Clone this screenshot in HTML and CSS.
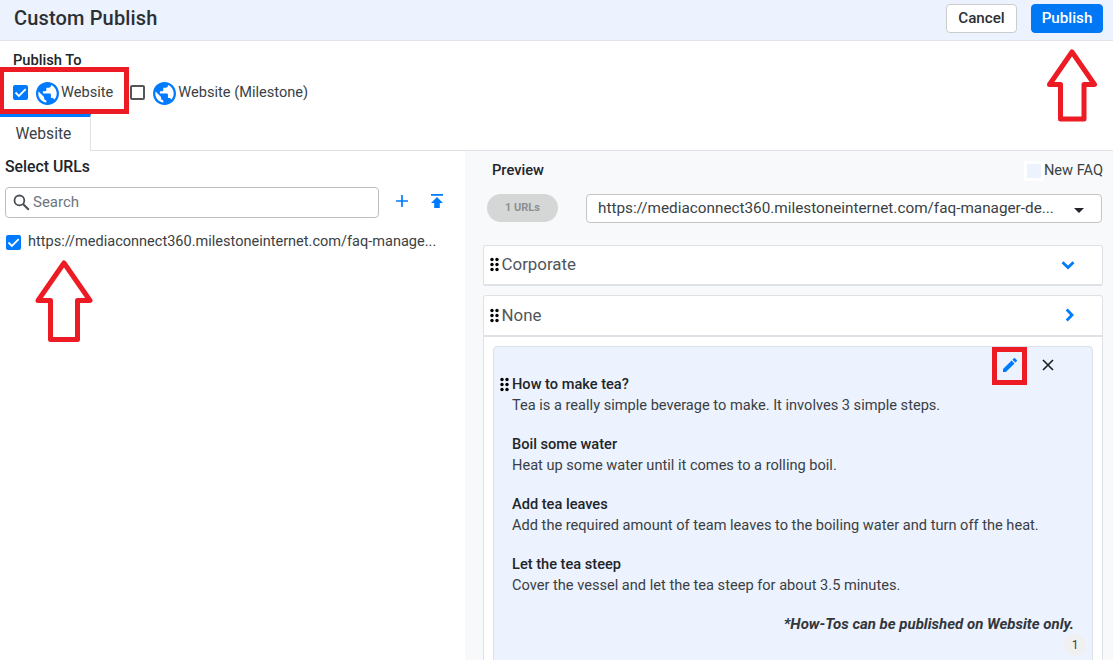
FILE: index.html
```html
<!DOCTYPE html>
<html lang="en">
<head>
    <meta charset="UTF-8">
    <meta name="viewport" content="width=device-width, initial-scale=1.0">
    <title>Custom Publish</title>
    <link rel="stylesheet" href="styles.css">
</head>
<body>
    <!-- Shared icons -->
    <svg class="sprite" width="0" height="0">
        <symbol id="globe" viewBox="2 2 20 20">
            <path d="M12 2C6.48 2 2 6.48 2 12s4.48 10 10 10 10-4.480 10-10S17.520 2 12 2zm-1 17.930c-3.950-.49-7-3.850-7-7.930 0-.62.080-1.210.21-1.790L9 15v1c0 1.100.9 2 2 2v1.930zm6.900-2.540c-.26-.81-1-1.390-1.900-1.390h-1v-3c0-.55-.45-1-1-1H8v-2h2c.55 0 1-.45 1-1V7h2c1.100 0 2-.9 2-2v-.41c2.930 1.190 5 4.060 5 7.410 0 2.080-.8 3.970-2.100 5.390z"/>
        </symbol>
        <symbol id="grip" viewBox="0 0 9 15">
            <circle cx="2" cy="2.500" r="1.700"/><circle cx="7" cy="2.500" r="1.700"/>
            <circle cx="2" cy="7.500" r="1.700"/><circle cx="7" cy="7.500" r="1.700"/>
            <circle cx="2" cy="12.500" r="1.700"/><circle cx="7" cy="12.500" r="1.700"/>
        </symbol>
        <symbol id="check" viewBox="0 0 15 15">
            <path d="M2.500 7.500l3.400 3.400 6.800-6.800" fill="none" stroke="#fff" stroke-width="1.800"/>
        </symbol>
    </svg>

    <header class="header">
        <h1>Custom Publish</h1>
        <button class="btn">Cancel</button>
        <button class="btn btn-primary">Publish</button>
    </header>

    <section class="publish-to">
        <h2>Publish To</h2>
        <div class="sites">
            <label class="site">
                <span class="checkbox checked"><svg><use href="#check"/></svg></span>
                <svg class="globe"><use href="#globe"/></svg>
                <span>Website</span>
            </label>
            <label class="site">
                <span class="checkbox"></span>
                <svg class="globe"><use href="#globe"/></svg>
                <span>Website (Milestone)</span>
            </label>
        </div>
    </section>

    <nav class="tabs">
        <div class="tab">Website</div>
    </nav>

    <main class="content">
        <section class="urls">
            <h2>Select URLs</h2>
            <div class="search-row">
                <div class="search">
                    <svg width="17" height="17" viewBox="0 0 17 17">
                        <circle cx="6.400" cy="6.400" r="4.900" fill="none" stroke="#495057" stroke-width="1.800"/>
                        <path d="M10 10l5.800 5.800" stroke="#495057" stroke-width="2.100"/>
                    </svg>
                    <span>Search</span>
                </div>
                <svg class="add" width="12" height="12" viewBox="0 0 12 12">
                    <path d="M6 0v12M0 6h12" stroke="#007bff" stroke-width="1.700"/>
                </svg>
                <svg class="upload" width="12" height="14" viewBox="0 0 12 14">
                    <path d="M0 0h12v1.800H0zM6 3l6 6H8.800v5H3.200V9H0z" fill="#007bff"/>
                </svg>
            </div>
            <label class="url">
                <span class="checkbox checked"><svg><use href="#check"/></svg></span>
                <span>https://mediaconnect360.milestoneinternet.com/faq-manage...</span>
            </label>
        </section>

        <section class="preview">
            <div class="preview-head">
                <h2>Preview</h2>
                <div class="legend"><span class="swatch"></span>New FAQ</div>
            </div>
            <div class="preview-filter">
                <span class="pill">1 URLs</span>
                <div class="select">
                    <span>https://mediaconnect360.milestoneinternet.com/faq-manager-de...</span>
                    <span class="caret"></span>
                </div>
            </div>

            <div class="group">
                <div class="group-head">
                    <svg class="grip"><use href="#grip"/></svg>
                    <span>Corporate</span>
                    <svg class="chevron" width="14" height="14" viewBox="0 0 14 14">
                        <path d="M1.500 4.200L7 9.500l5.500-5.300"/>
                    </svg>
                </div>
            </div>

            <div class="group open">
                <div class="group-head">
                    <svg class="grip"><use href="#grip"/></svg>
                    <span>None</span>
                    <svg class="chevron" width="14" height="14" viewBox="0 0 14 14">
                        <path d="M5.700 1.500L11 7l-5.300 5.500"/>
                    </svg>
                </div>
                <div class="faq">
                    <div class="faq-actions">
                        <svg width="14" height="14" viewBox="3 3 18 18">
                            <path d="M3 17.250V21h3.750L17.810 9.940l-3.750-3.750L3 17.250zM20.710 7.040c.39-.39.39-1.020 0-1.410l-2.340-2.340c-.39-.39-1.020-.39-1.410 0l-1.830 1.830 3.750 3.750 1.830-1.830z" fill="#007bff"/>
                        </svg>
                        <svg width="12" height="12" viewBox="0 0 12 12">
                            <path d="M1 1l10 10M11 1L1 11" stroke="#212529" stroke-width="1.700"/>
                        </svg>
                    </div>
                    <svg class="grip"><use href="#grip"/></svg>
                    <h3>How to make tea?</h3>
                    <p>Tea is a really simple beverage to make. It involves 3 simple steps.</p>
                    <h3>Boil some water</h3>
                    <p>Heat up some water until it comes to a rolling boil.</p>
                    <h3>Add tea leaves</h3>
                    <p>Add the required amount of team leaves to the boiling water and turn off the heat.</p>
                    <h3>Let the tea steep</h3>
                    <p>Cover the vessel and let the tea steep for about 3.5 minutes.</p>
                    <div class="note">*How-Tos can be published on Website only.</div>
                    <span class="count">1</span>
                </div>
            </div>
        </section>
    </main>

    <!-- Callouts -->
    <div class="callout callout-site"></div>
    <div class="callout callout-edit"></div>
    <svg class="arrow arrow-publish" width="52" height="74" viewBox="0 0 52 74">
        <path d="M26 4L48.500 36.500H38V71H14.500V36.500H3.500Z"/>
    </svg>
    <svg class="arrow arrow-url" width="60" height="84" viewBox="0 0 60 84">
        <path d="M30 4L56 41.500H43.500V80.500H16.500V41.500H4Z"/>
    </svg>
</body>
</html>
```

FILE: styles.css
```css
* {
    box-sizing: border-box;
}
body {
    margin: 0;
    height: 660px;
    overflow: hidden;
    position: relative;
    background: #fff;
    color: #3a3f44;
    font-family: Roboto, sans-serif;
    font-size: 14.600px;
    line-height: 21px;
}
h1, h2, h3, p {
    margin: 0;
}
h2 {
    font-size: 14.700px;
    font-weight: 500;
    color: #212529;
}
svg {
    display: block;
    flex: none;
}
.sprite {
    position: absolute;
}

/* Header */
.header {
    display: flex;
    align-items: flex-start;
    height: 41px;
    padding: 4px 10px 0 14px;
    background: #ecf2fe;
    border-bottom: 1px solid #e0e4ea;
}
.header h1 {
    margin-right: auto;
    font-size: 20px;
    font-weight: 500;
    line-height: 28px;
    letter-spacing: 0.150px;
    color: #2b3035;
}
.btn {
    width: 71px;
    height: 29px;
    padding: 0 0 2px;
    border: 1px solid #ccc;
    border-radius: 4px;
    background: #fff;
    color: #2b3035;
    font: 500 15.200px Roboto, sans-serif;
}
.btn-primary {
    width: 72px;
    margin-left: 14px;
    border-color: #0077f5;
    background: #0077f5;
    color: #fff;
}

/* Publish targets */
.publish-to {
    height: 73px;
    padding: 9px 13px 0;
}
.sites {
    display: flex;
    gap: 17px;
    margin-top: 9px;
}
.site {
    display: flex;
    align-items: center;
    height: 24px;
}
.checkbox {
    flex: none;
    width: 15px;
    height: 15px;
    border: 2px solid #555;
    border-radius: 2px;
}
.checkbox.checked {
    border: 0;
    background: #007bff;
}
.checkbox svg {
    width: 15px;
    height: 15px;
}
.globe {
    width: 23px;
    height: 23px;
    margin: 2px 2.500px 0 7.500px;
    fill: #007bff;
}

/* Tabs */
.tabs {
    display: flex;
    height: 37px;
}
.tabs::after {
    content: "";
    flex: 1;
    border-bottom: 1px solid #dee2e6;
}
.tab {
    width: 91px;
    padding: 7px 0 0 15.500px;
    border-top: 3px solid #007bff;
    border-right: 1px solid #dee2e6;
    font-size: 15.600px;
}

.content {
    display: flex;
    height: 509px;
    overflow: hidden;
}

/* URL list */
.urls {
    width: 465px;
    padding: 5px 5px 0;
}
.urls h2 {
    font-size: 15.800px;
}
.search-row {
    display: flex;
    align-items: center;
    margin-top: 10px;
}
.search {
    display: flex;
    align-items: center;
    gap: 3px;
    width: 374px;
    height: 31px;
    padding-left: 7px;
    border: 1px solid #bfbfbf;
    border-radius: 4px;
    color: #6c757d;
    font-size: 15px;
}
.add {
    margin: 0 0 3px 17px;
}
.upload {
    margin: 0 0 3px 23px;
}
.url {
    display: flex;
    align-items: center;
    gap: 7px;
    margin: 13px 0 0 1px;
    font-size: 14.540px;
}
.url .checkbox {
    margin-top: 1px;
}

/* Preview */
.preview {
    flex: 1;
    padding: 9px 10px 0 18px;
    background: #f8f9fb;
}
.preview-head {
    display: flex;
    justify-content: space-between;
    padding-left: 9px;
}
.legend {
    display: flex;
    align-items: center;
}
.swatch {
    width: 20px;
    height: 20px;
    border: 3px solid #fff;
    background: #ecf2fe;
}
.preview-filter {
    display: flex;
    justify-content: space-between;
    padding: 0 1px 0 4px;
    margin: 13px 0 22px;
}
.pill {
    width: 71px;
    height: 28px;
    border-radius: 14px;
    background: #d5d7d7;
    color: #8c8f91;
    font-size: 11px;
    font-weight: 700;
    line-height: 27px;
    text-align: center;
}
.select {
    display: flex;
    align-items: center;
    justify-content: space-between;
    width: 516px;
    height: 29px;
    padding: 0 17px 0 11px;
    border: 1px solid #c4c4c4;
    border-radius: 4px;
    background: #fff;
    font-size: 15.300px;
}
.caret {
    margin-top: 4px;
    border: 5px solid transparent;
    border-top-color: #212529;
    border-bottom: 0;
}
.group {
    margin-bottom: 9px;
    border: 1px solid #dee2e6;
    border-bottom: 0;
    border-radius: 3px;
    background: #fff;
}
.group-head {
    display: flex;
    align-items: center;
    height: 40px;
    padding: 0 27px 1px 5.500px;
    border-bottom: 2px solid #dee2e6;
    font-size: 16.900px;
    color: #50565c;
}
.open .group-head {
    height: 41px;
}
.grip {
    width: 9px;
    height: 15px;
    margin-right: 3px;
    fill: #000;
}
.chevron {
    margin-left: auto;
    fill: none;
    stroke: #007bff;
    stroke-width: 2.800;
}
.faq {
    position: relative;
    height: 380px;
    margin: 9px 9px 0;
    padding: 27px 18px 0;
    border: 1px solid #dbe0ea;
    border-radius: 4px;
    background: #ecf2fe;
}
.faq .grip {
    position: absolute;
    left: 5.500px;
    top: 30px;
}
.faq-actions {
    position: absolute;
    top: 11px;
    right: 38px;
    display: flex;
    align-items: center;
    gap: 25px;
}
.faq h3 {
    font-size: 14.600px;
    font-weight: 500;
    color: #212529;
}
.faq p {
    margin-bottom: 18px;
}
.note {
    font-size: 15px;
    font-style: italic;
    font-weight: 700;
    text-align: right;
    color: #32373c;
}
.count {
    position: absolute;
    top: 287px;
    right: 6px;
    width: 22px;
    height: 22px;
    border-radius: 50%;
    background: #f0f0f0;
    font-size: 12px;
    line-height: 22px;
    text-align: center;
}

/* Callouts */
.callout {
    position: absolute;
    border: 5px solid #ed1c24;
}
.callout-site {
    left: -1px;
    top: 67px;
    width: 130px;
    height: 47px;
}
.callout-edit {
    left: 992px;
    top: 347px;
    width: 35px;
    height: 38px;
}
.arrow {
    position: absolute;
    fill: none;
    stroke: #ed1c24;
    stroke-width: 5;
    stroke-linejoin: round;
}
.arrow-publish {
    left: 1046px;
    top: 48px;
}
.arrow-url {
    left: 34px;
    top: 259px;
}
```
